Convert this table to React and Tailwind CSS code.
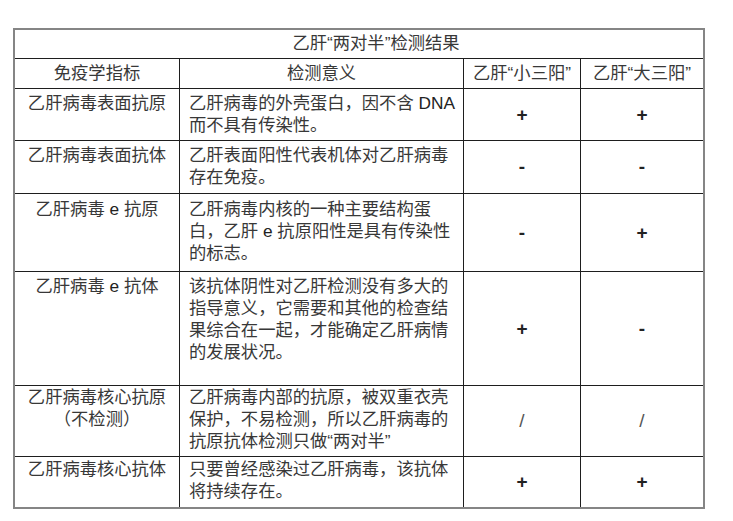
import React from "react";

const F = "font-[family-name:'Liberation_Sans','Noto_Sans_CJK_SC',sans-serif]";

function Sym({ children, light }) {
  return (
    <div className="flex items-center justify-center border-r border-b border-[#1e1e1e] last:border-r-0">
      <span className={light ? "text-[19px] text-[#555]" : "text-[19px] font-bold text-[#222]"}>{children}</span>
    </div>
  );
}

const rows = [
  {
    pt: "pt-[3px]",
    name: ["乙肝病毒表面抗原"],
    desc: [
      <>乙肝病毒的外壳蛋白，因不含 <span className="text-[#222]">DNA</span></>,
      "而不具有传染性。",
    ],
    a: "+",
    b: "+",
  },
  {
    pt: "pt-[3px]",
    name: ["乙肝病毒表面抗体"],
    desc: ["乙肝表面阳性代表机体对乙肝病毒", "存在免疫。"],
    a: "-",
    b: "-",
  },
  {
    pt: "pt-[4px]",
    name: [<>乙肝病毒 <span className="text-[#222]">e</span> 抗原</>],
    desc: [
      "乙肝病毒内核的一种主要结构蛋",
      <>白，乙肝 <span className="text-[#222]">e</span> 抗原阳性是具有传染性</>,
      "的标志。",
    ],
    a: "-",
    b: "+",
  },
  {
    pt: "pt-[3px]",
    name: [<>乙肝病毒 <span className="text-[#222]">e</span> 抗体</>],
    desc: [
      "该抗体阴性对乙肝检测没有多大的",
      "指导意义，它需要和其他的检查结",
      "果综合在一起，才能确定乙肝病情",
      "的发展状况。",
    ],
    a: "+",
    b: "-",
  },
  {
    pt: "pt-0",
    name: ["乙肝病毒核心抗原", "（不检测）"],
    desc: [
      "乙肝病毒内部的抗原，被双重衣壳",
      "保护，不易检测，所以乙肝病毒的",
      "抗原抗体检测只做“两对半”",
    ],
    a: "/",
    b: "/",
    light: true,
  },
  {
    pt: "pt-[1px]",
    name: ["乙肝病毒核心抗体"],
    desc: ["只要曾经感染过乙肝病毒，该抗体", "将持续存在。"],
    a: "+",
    b: "+",
    last: true,
  },
];

export default function App() {
  return (
    <div className={`min-h-[521px] w-[733px] bg-white pt-[28px] pl-[13px] ${F} text-[17.3px] leading-[22px] text-[#383838]`}>
      <div className="w-[692px] border-2 border-[#858585]">
        <div className="grid grid-cols-[165px_284px_117px_122px] grid-rows-[29px_30px_52px_53px_78px_114px_71px_50px]">
          <div className="col-span-4 flex items-center justify-center border-b border-[#1e1e1e] pl-[34px] pb-[3px]">
            乙肝“两对半”检测结果
          </div>
          <div className="flex items-center justify-center border-r border-b border-[#1e1e1e] pb-[1px]">免疫学指标</div>
          <div className="flex items-center justify-center border-r border-b border-[#1e1e1e] pb-[1px]">检测意义</div>
          <div className="flex items-center justify-center border-r border-b border-[#1e1e1e] pb-[1px]">乙肝“小三阳”</div>
          <div className="flex items-center justify-center border-b border-[#1e1e1e] pb-[1px]">乙肝“大三阳”</div>
          {rows.map((r, i) => (
            <React.Fragment key={i}>
              <div className={`border-r border-[#1e1e1e] ${r.last ? "" : "border-b"} ${r.pt} text-center`}>
                {r.name.map((n, j) => (
                  <div key={j} className="whitespace-nowrap">{n}</div>
                ))}
              </div>
              <div className={`border-r border-[#1e1e1e] ${r.last ? "" : "border-b"} ${r.pt} pl-[9px]`}>
                {r.desc.map((n, j) => (
                  <div key={j} className="whitespace-nowrap">{n}</div>
                ))}
              </div>
              <div className={`flex items-center justify-center border-r border-[#1e1e1e] ${r.last ? "" : "border-b"}`}>
                <span className={r.light ? "text-[19px] text-[#555]" : "text-[19px] font-bold text-[#222]"}>{r.a}</span>
              </div>
              <div className={`flex items-center justify-center border-[#1e1e1e] ${r.last ? "" : "border-b"}`}>
                <span className={r.light ? "text-[19px] text-[#555]" : "text-[19px] font-bold text-[#222]"}>{r.b}</span>
              </div>
            </React.Fragment>
          ))}
        </div>
      </div>
    </div>
  );
}
